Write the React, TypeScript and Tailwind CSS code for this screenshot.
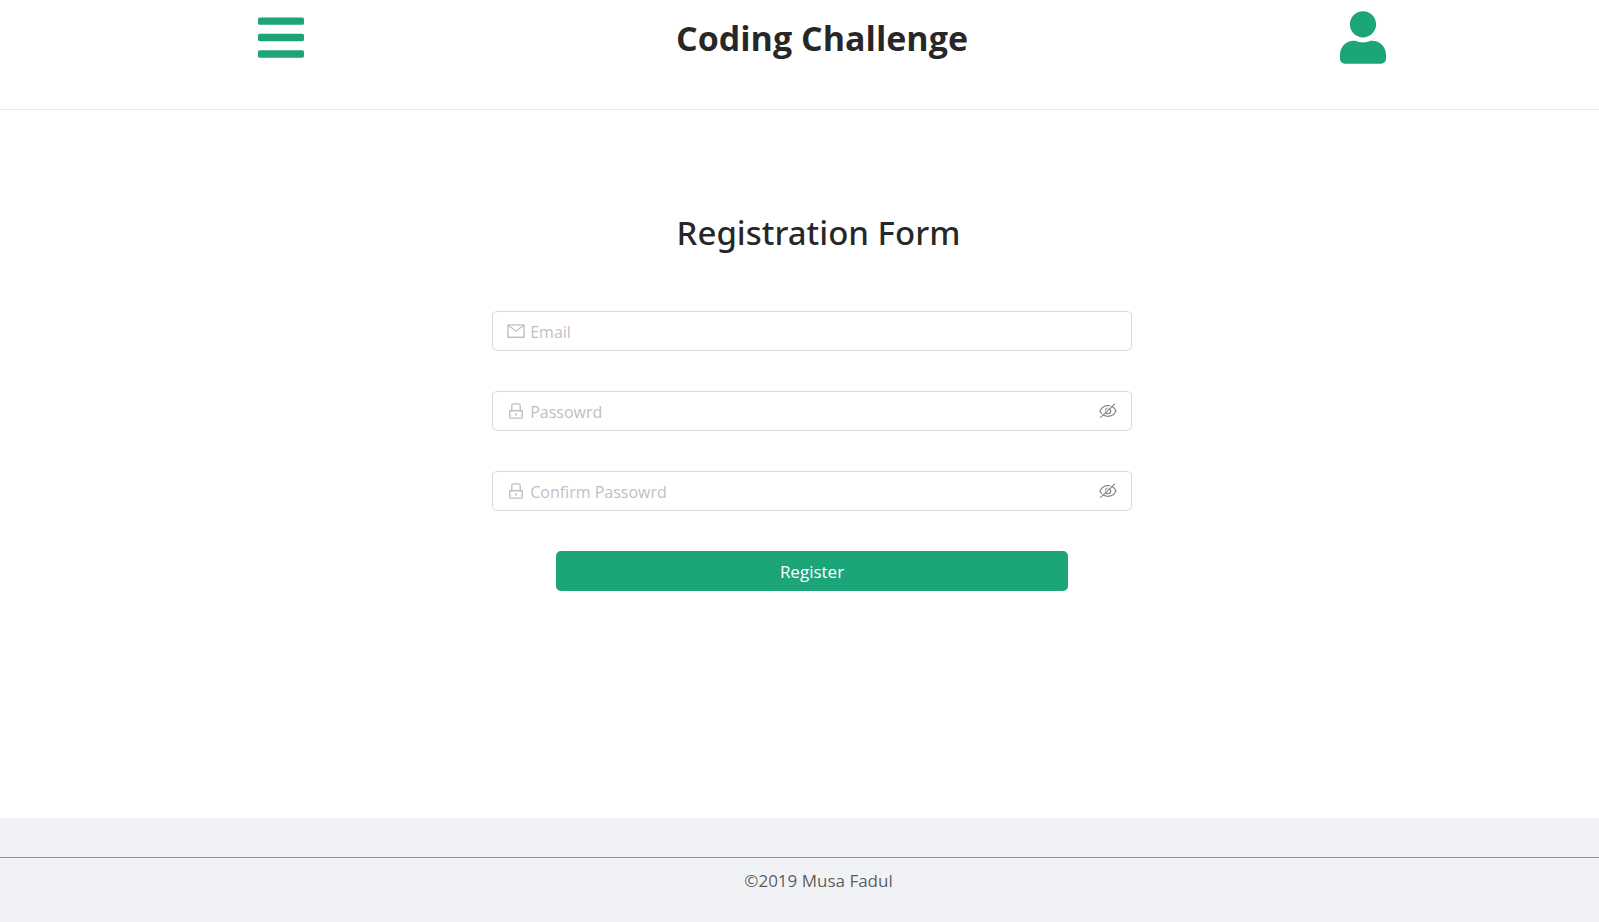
import type { ReactNode } from "react";
import { useState } from "react";
import { FaBars, FaUser } from "react-icons/fa";
import { AiOutlineLock, AiOutlineMail } from "react-icons/ai";

type FieldProps = {
  id: string;
  label: string;
  icon: ReactNode;
  secret?: boolean;
};

function EyeOff() {
  return (
    <svg viewBox="0 0 18 16" fill="none" className="h-4 w-[18px]" aria-hidden="true">
      <path
        d="M1 8C2.6 4.5 5.400 2.700 9 2.700C12.600 2.700 15.400 4.500 17 8C15.400 11.500 12.600 13.300 9 13.300C5.400 13.300 2.600 11.500 1 8Z"
        stroke="currentColor"
        strokeWidth="1.300"
        strokeLinejoin="round"
      />
      <circle cx="9" cy="8" r="2.700" stroke="currentColor" strokeWidth="1.300" />
      <path d="M0.500 13.700L15 0" stroke="#fff" strokeWidth="1.100" />
      <path d="M1.300 14.600L15.800 0.900" stroke="currentColor" strokeWidth="1.300" />
    </svg>
  );
}

function Field({ id, label, icon, secret = false }: FieldProps) {
  const [visible, setVisible] = useState(false);
  return (
    <div className="flex h-10 w-full items-center rounded-[5px] border border-[#d9d9d9] bg-white pr-[14px] pl-[13px] focus-within:border-[#1da57a]">
      <label htmlFor={id} aria-label={label} className="flex text-[#bfbfbf]">
        {icon}
      </label>
      <input
        id={id}
        type={secret && !visible ? "password" : "text"}
        placeholder={label}
        className="ml-1 min-w-0 flex-1 bg-transparent pt-px text-base text-black/65 outline-none placeholder:text-[#bfbfbf]"
      />
      {secret && (
        <button
          type="button"
          aria-label={`Show ${label}`}
          onClick={() => setVisible(!visible)}
          className="flex text-[#8c8c8c]"
        >
          <EyeOff />
        </button>
      )}
    </div>
  );
}

export default function App() {
  return (
    <div className="flex min-h-screen flex-col bg-[#f0f2f5] font-['Open_Sans','Noto_Sans',sans-serif]">
      <header className="flex h-[110px] items-start justify-between border-b border-[#e8e8e8] bg-white pt-[11px] pr-[213px] pl-[258px]">
        <button type="button" aria-label="Menu" className="text-[#1da57a]">
          <FaBars className="h-[53px] w-[46px]" />
        </button>
        <h1 className="text-[34px] leading-[54px] font-bold text-black/85">Coding Challenge</h1>
        <button type="button" aria-label="Account" className="text-[#1da57a]">
          <FaUser className="h-[53px] w-[46px]" />
        </button>
      </header>

      <main className="flex flex-1 flex-col items-center bg-white pt-[100px]">
        <h2 className="pl-[38px] font-['Noto_Sans',sans-serif] text-[33px] leading-[46px] font-medium text-black/85">
          Registration Form
        </h2>
        <form
          onSubmit={(event) => event.preventDefault()}
          className="mt-[55px] ml-[25px] flex w-2/5 flex-col items-center gap-10"
        >
          <Field id="email" label="Email" icon={<AiOutlineMail className="size-5" />} />
          <Field id="password" label="Passowrd" secret icon={<AiOutlineLock className="size-5" />} />
          <Field id="confirm" label="Confirm Passowrd" secret icon={<AiOutlineLock className="size-5" />} />
          <button
            type="submit"
            className="h-10 w-4/5 rounded-[5px] bg-[#1da57a] pt-0.5 text-[17px] leading-6 text-white"
          >
            Register
          </button>
        </form>
      </main>

      <footer className="h-[104px] pt-[39px]">
        <div className="border-t border-[#8f9399] pt-[11px] pl-[38px] text-center text-[17px] leading-6 text-black/65">
          ©2019 Musa Fadul
        </div>
      </footer>
    </div>
  );
}
